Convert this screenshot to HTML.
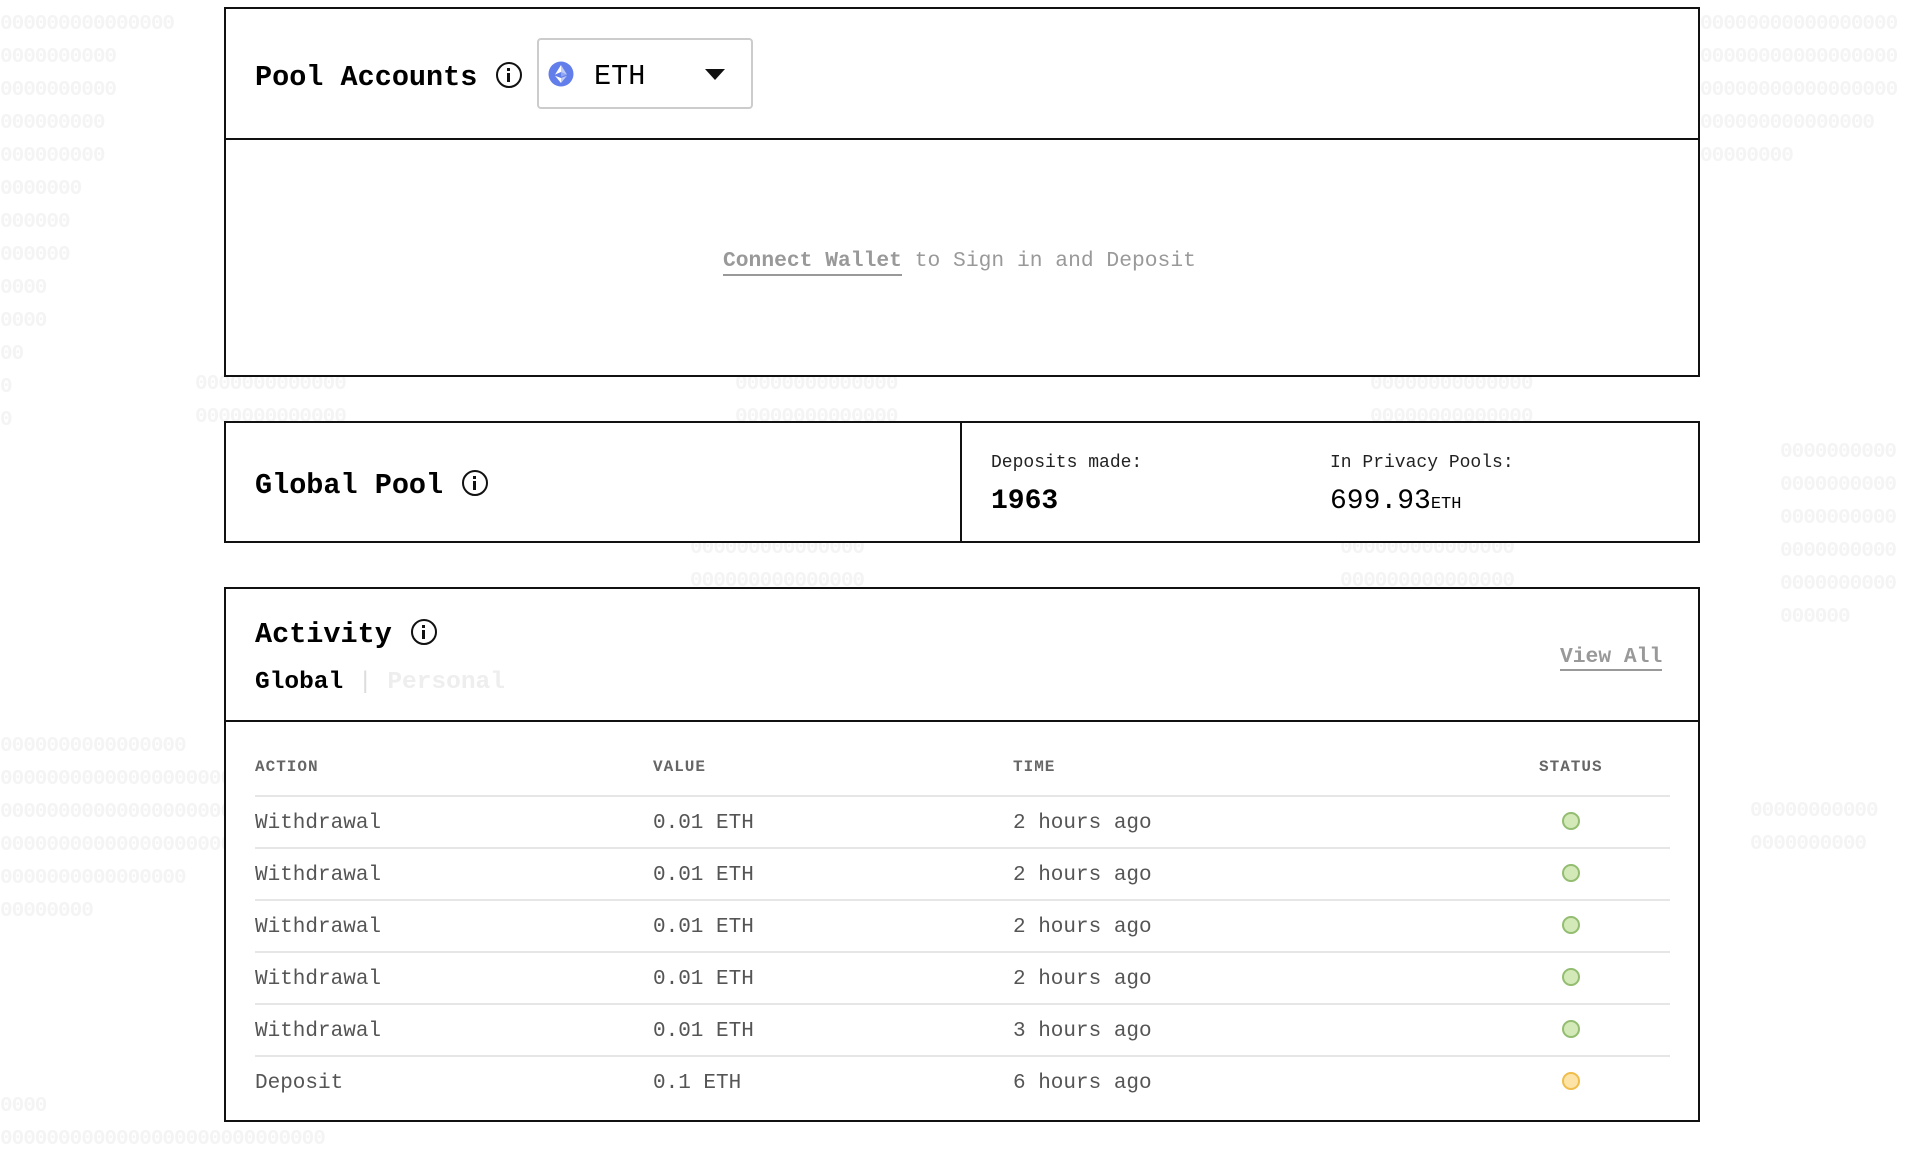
<!DOCTYPE html>
<html><head><meta charset="utf-8"><style>
*{margin:0;padding:0;box-sizing:border-box}
body{width:1928px;height:1139px;background:#fff;position:relative;overflow:hidden;font-family:"Liberation Mono",monospace;color:#000}
.z{position:absolute;color:#f4f4f4;font-size:21px;font-weight:bold;line-height:33px;white-space:pre;letter-spacing:-1px}
.box{position:absolute;border:2px solid #111;background:#fff}
.a{position:absolute;white-space:nowrap}
.info{display:inline-block;width:26px;height:26px;border:2.5px solid #111;border-radius:50%;position:relative;vertical-align:middle}
.info:before{content:"";position:absolute;left:9px;top:4px;width:3px;height:3px;background:#111}
.info:after{content:"";position:absolute;left:9px;top:9px;width:3px;height:9px;background:#111}
.t{font-size:21px;color:#555}
.h{font-size:16px;font-weight:bold;color:#666;letter-spacing:1px}
.line{position:absolute;left:255px;width:1415px;height:2px;background:#e6e6e6}
.dot{position:absolute;left:1562px;width:18px;height:18px;border-radius:50%;background:#d3eab8;border:2px solid #93bd70}
</style></head><body>
<div class="z" style="left:0;top:8px">000000000000000
0000000000
0000000000
000000000
000000000
0000000
000000
000000
0000
0000
00
0
0</div>
<div class="z" style="left:1700px;top:8px">00000000000000000
00000000000000000
00000000000000000
000000000000000
00000000</div>
<div class="z" style="left:195px;top:368px">0000000000000
0000000000000</div>
<div class="z" style="left:735px;top:368px">00000000000000
00000000000000</div>
<div class="z" style="left:1370px;top:368px">00000000000000
00000000000000</div>
<div class="z" style="left:1780px;top:436px">0000000000
0000000000
0000000000
0000000000
0000000000
000000</div>
<div class="z" style="left:690px;top:532px">000000000000000
000000000000000</div>
<div class="z" style="left:1340px;top:532px">000000000000000
000000000000000</div>
<div class="z" style="left:0;top:730px">0000000000000000
00000000000000000000
00000000000000000000
00000000000000000000
0000000000000000
00000000</div>
<div class="z" style="left:1750px;top:795px">00000000000
0000000000</div>
<div class="z" style="left:0;top:1090px">0000
0000000000000000000000000000</div>

<div class="box" style="left:224px;top:7px;width:1476px;height:370px"></div>
<div style="position:absolute;left:224px;top:138px;width:1476px;height:2px;background:#111"></div>
<div class="a" style="left:255px;top:61px;font-size:28.5px;font-weight:bold">Pool Accounts <span class="info" style="margin-left:2px;margin-top:-5px"></span></div>
<div style="position:absolute;left:537px;top:38px;width:216px;height:71px;border:2px solid #ccc;border-radius:4px"></div>
<svg style="position:absolute;left:548px;top:61px" width="26" height="26" viewBox="0 0 26 26"><circle cx="13" cy="13" r="12.5" fill="#627eea"/><path d="M13 4 L13 11 L19 13.6 Z" fill="#fff" opacity=".6"/><path d="M13 4 L7 13.6 L13 11Z" fill="#fff"/><path d="M13 17 L13 22 L19 14.8Z" fill="#fff" opacity=".6"/><path d="M13 22 L13 17 L7 14.8Z" fill="#fff"/><path d="M13 15.8 L19 13.6 L13 11Z" fill="#fff" opacity=".3"/></svg>
<div class="a" style="left:594px;top:60px;font-size:28.5px">ETH</div>
<svg style="position:absolute;left:705px;top:69px" width="20" height="12"><path d="M0 0H20L10 11Z" fill="#111"/></svg>
<div class="a" style="left:723px;top:249px;font-size:21.3px;color:#999"><span style="font-weight:bold;border-bottom:2px solid #999;padding-bottom:1px">Connect Wallet</span> to Sign in and Deposit</div>

<div class="box" style="left:224px;top:421px;width:1476px;height:122px"></div>
<div style="position:absolute;left:960px;top:421px;width:2px;height:122px;background:#111"></div>
<div class="a" style="left:255px;top:469px;font-size:28.5px;font-weight:bold">Global Pool <span class="info" style="margin-left:2px;margin-top:-5px"></span></div>
<div class="a" style="left:991px;top:453px;font-size:18px;color:#222">Deposits made:</div>
<div class="a" style="left:991px;top:486px;font-size:28px;font-weight:bold">1963</div>
<div class="a" style="left:1330px;top:453px;font-size:18px;color:#222">In Privacy Pools:</div>
<div class="a" style="left:1330px;top:486px;font-size:28px">699.93<span style="font-size:17px">ETH</span></div>

<div class="box" style="left:224px;top:587px;width:1476px;height:535px"></div>
<div style="position:absolute;left:224px;top:720px;width:1476px;height:2px;background:#111"></div>
<div class="a" style="left:255px;top:618px;font-size:28.5px;font-weight:bold">Activity <span class="info" style="margin-left:2px;margin-top:-5px"></span></div>
<div class="a" style="left:255px;top:669px;font-size:24.5px;font-weight:bold">Global <span style="color:#ddd;font-weight:normal">|</span> <span style="color:#eee">Personal</span></div>
<div class="a" style="left:1560px;top:645px;font-size:21.3px;font-weight:bold;color:#999;border-bottom:2px solid #999;line-height:24px">View All</div>

<div class="a h" style="left:255px;top:758px">ACTION</div>
<div class="a h" style="left:653px;top:758px">VALUE</div>
<div class="a h" style="left:1013px;top:758px">TIME</div>
<div class="a h" style="left:1539px;top:758px">STATUS</div>

<div class="line" style="top:795px"></div>
<div class="line" style="top:847px"></div>
<div class="line" style="top:899px"></div>
<div class="line" style="top:951px"></div>
<div class="line" style="top:1003px"></div>
<div class="line" style="top:1055px"></div>

<div class="a t" style="left:255px;top:812px">Withdrawal</div><div class="a t" style="left:653px;top:812px">0.01 ETH</div><div class="a t" style="left:1013px;top:812px">2 hours ago</div><div class="dot" style="top:812px"></div>
<div class="a t" style="left:255px;top:864px">Withdrawal</div><div class="a t" style="left:653px;top:864px">0.01 ETH</div><div class="a t" style="left:1013px;top:864px">2 hours ago</div><div class="dot" style="top:864px"></div>
<div class="a t" style="left:255px;top:916px">Withdrawal</div><div class="a t" style="left:653px;top:916px">0.01 ETH</div><div class="a t" style="left:1013px;top:916px">2 hours ago</div><div class="dot" style="top:916px"></div>
<div class="a t" style="left:255px;top:968px">Withdrawal</div><div class="a t" style="left:653px;top:968px">0.01 ETH</div><div class="a t" style="left:1013px;top:968px">2 hours ago</div><div class="dot" style="top:968px"></div>
<div class="a t" style="left:255px;top:1020px">Withdrawal</div><div class="a t" style="left:653px;top:1020px">0.01 ETH</div><div class="a t" style="left:1013px;top:1020px">3 hours ago</div><div class="dot" style="top:1020px"></div>
<div class="a t" style="left:255px;top:1072px">Deposit</div><div class="a t" style="left:653px;top:1072px">0.1 ETH</div><div class="a t" style="left:1013px;top:1072px">6 hours ago</div><div class="dot" style="top:1072px;background:#fde4a6;border-color:#f0bd4c"></div>
</body></html>
